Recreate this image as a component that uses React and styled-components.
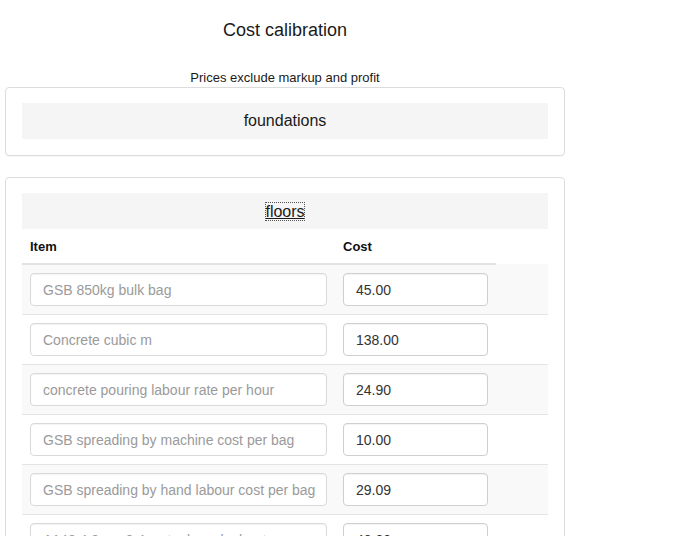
import React from "react";
import styled, { createGlobalStyle } from "styled-components";

const Global = createGlobalStyle`
  html, body { margin: 0; padding: 0; background: #fff; }
  body { font-family: "Liberation Sans", Arial, sans-serif; color: #333; }
  * { box-sizing: border-box; }
`;

const Page = styled.div`
  width: 565px;
  padding: 20px 0 0 5px;
`;

const Title = styled.h3`
  margin: 0;
  font-size: 18px;
  line-height: 20px;
  font-weight: 400;
  color: #1a1a1a;
  text-align: center;
`;

const Subtitle = styled.p`
  margin: 29px 0 0;
  font-size: 13px;
  line-height: 18px;
  color: #1a1a1a;
  text-align: center;
`;

const Card = styled.section`
  border: 1px solid #dcdcdc;
  border-radius: 4px;
  padding: 15px 16px ${(p) => (p.$open ? "0" : "16px")};
  margin-bottom: 21px;
  box-shadow: 0 1px 1px rgba(0, 0, 0, 0.03);
`;

const CardHeader = styled.div`
  background: #f5f5f5;
  height: 36px;
  display: flex;
  align-items: center;
  justify-content: center;
  font-size: 16px;
  color: #1a1a1a;
`;

const HeaderLink = styled.a`
  color: #1a1a1a;
  text-decoration: underline;
  line-height: 19px;
  outline: 1px dotted #555;
  outline-offset: -1px;
  cursor: pointer;
`;

const Table = styled.table`
  width: 100%;
  border-collapse: collapse;
  font-size: 13px;
`;

const Th = styled.th`
  text-align: left;
  font-weight: 700;
  color: #111;
  padding: 9px 8px 8px;
  line-height: 17px;
  border-bottom: 2px solid #e2e2e2;
  width: ${(p) => p.$w}px;
`;

const Row = styled.tr`
  background: ${(p) => (p.$striped ? "#f9f9f9" : "#fff")};
  & > td {
    border-top: ${(p) => (p.$first ? "0" : "1px solid #e4e4e4")};
  }
`;

const Td = styled.td`
  padding: 8px;
  vertical-align: middle;
`;

const Input = styled.input`
  display: block;
  width: 100%;
  height: 33px;
  padding: 6px 4px 6px 12px;
  font-family: "Liberation Sans", Arial, sans-serif;
  font-size: 14px;
  color: #333;
  background: #fff;
  border: 1px solid ${(p) => (p.$muted ? "#d9d9d9" : "#cfcfcf")};
  border-radius: 4px;
  box-shadow: inset 0 1px 1px rgba(0, 0, 0, 0.05);
  &::placeholder { color: #9a9a9a; }
`;

const rows = [
  ["GSB 850kg bulk bag", "45.00"],
  ["Concrete cubic m", "138.00"],
  ["concrete pouring labour rate per hour", "24.90"],
  ["GSB spreading by machine cost per bag", "10.00"],
  ["GSB spreading by hand labour cost per bag", "29.09"],
  ["A142 4.8m x 2.4m steel mesh sheet", "48.00"],
];

export default function App() {
  return (
    <>
      <Global />
      <Page>
        <Title>Cost calibration</Title>
        <Subtitle>Prices exclude markup and profit</Subtitle>
        <Card>
          <CardHeader>foundations</CardHeader>
        </Card>
        <Card $open>
          <CardHeader>
            <HeaderLink>floors</HeaderLink>
          </CardHeader>
          <Table>
            <thead>
              <tr>
                <Th $w={313}>Item</Th>
                <Th $w={161}>Cost</Th>
              </tr>
            </thead>
            <tbody>
              {rows.map(([item, cost], i) => (
                <Row key={i} $striped={i % 2 === 0} $first={i === 0}>
                  <Td>
                    <Input $muted placeholder={item} readOnly />
                  </Td>
                  <Td>
                    <Input defaultValue={cost} />
                  </Td>
                  <Td />
                </Row>
              ))}
            </tbody>
          </Table>
        </Card>
      </Page>
    </>
  );
}
